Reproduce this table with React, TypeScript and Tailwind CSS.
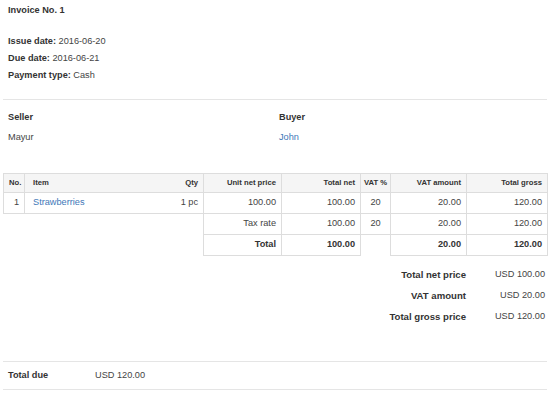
const items = [{ no: 1, name: 'Strawberries', qty: '1 pc', unit: '100.00', net: '100.00', vat: '20', vatAmount: '20.00', gross: '120.00' }]

const summary = [
  { label: 'Total net price', value: 'USD 100.00' },
  { label: 'VAT amount', value: 'USD 20.00' },
  { label: 'Total gross price', value: 'USD 120.00' },
]

const th = 'border border-[#dddddd] bg-[#f5f5f5] px-[5px] h-[19px] text-[7.7px] font-bold text-[#333] whitespace-nowrap'
const td = 'border border-[#dddddd] px-[5px] h-[21px] whitespace-nowrap'

export default function App() {
  return (
    <div className="w-[550px] h-[393px] bg-white px-[3px] text-[9.2px] text-[#444] overflow-hidden" style={{ fontFamily: '"Liberation Sans", Arial, sans-serif' }}>
      <div className="px-[5px] pt-[2px] leading-[17px]">
        <div className="font-bold text-[#333]">Invoice No. 1</div>
        <div className="mt-[14px]">
          <div><span className="font-bold text-[#333]">Issue date:</span> 2016-06-20</div>
          <div><span className="font-bold text-[#333]">Due date:</span> 2016-06-21</div>
          <div><span className="font-bold text-[#333]">Payment type:</span> Cash</div>
        </div>
      </div>

      <div className="mt-[15px] border-t border-[#e5e5e5]" />

      <div className="flex px-[5px] pt-[7px] leading-[20px]">
        <div className="w-[271px]">
          <div className="font-bold text-[#333]">Seller</div>
          <div>Mayur</div>
        </div>
        <div>
          <div className="font-bold text-[#333]">Buyer</div>
          <div className="text-[#4278b8]">John</div>
        </div>
      </div>

      <table className="mt-[26px] w-[544px] border-collapse table-fixed">
        <colgroup>
          <col className="w-[21px]" />
          <col className="w-[149px]" />
          <col className="w-[30px]" />
          <col className="w-[78px]" />
          <col className="w-[79px]" />
          <col className="w-[30px]" />
          <col className="w-[76px]" />
          <col className="w-[81px]" />
        </colgroup>
        <thead>
          <tr>
            <th className={`${th} text-left`}>No.</th>
            <th className={`${th} text-left border-r-0 !pl-[8px]`}>Item</th>
            <th className={`${th} text-right border-l-0`}>Qty</th>
            <th className={`${th} text-right`}>Unit net price</th>
            <th className={`${th} text-right`}>Total net</th>
            <th className={`${th} text-center !px-[2px]`}>VAT %</th>
            <th className={`${th} text-right`}>VAT amount</th>
            <th className={`${th} text-right`}>Total gross</th>
          </tr>
        </thead>
        <tbody>
          {items.map((it) => (
            <tr key={it.no}>
              <td className={`${td} text-right`}>{it.no}</td>
              <td className={`${td} text-left border-r-0 !pl-[8px] text-[#4278b8]`}>{it.name}</td>
              <td className={`${td} text-right border-l-0`}>{it.qty}</td>
              <td className={`${td} text-right`}>{it.unit}</td>
              <td className={`${td} text-right`}>{it.net}</td>
              <td className={`${td} text-center`}>{it.vat}</td>
              <td className={`${td} text-right`}>{it.vatAmount}</td>
              <td className={`${td} text-right`}>{it.gross}</td>
            </tr>
          ))}
          <tr>
            <td colSpan={3} className="border-0" />
            <td className={`${td} text-right`}>Tax rate</td>
            <td className={`${td} text-right`}>100.00</td>
            <td className={`${td} text-center`}>20</td>
            <td className={`${td} text-right`}>20.00</td>
            <td className={`${td} text-right`}>120.00</td>
          </tr>
          <tr className="font-bold text-[#333]">
            <td colSpan={3} className="border-0" />
            <td className={`${td} h-[20px] text-right`}>Total</td>
            <td className={`${td} h-[20px] text-right`}>100.00</td>
            <td className="border-0" />
            <td className={`${td} h-[20px] text-right`}>20.00</td>
            <td className={`${td} h-[20px] text-right`}>120.00</td>
          </tr>
        </tbody>
      </table>

      <div className="mt-[8px] leading-[21px]">
        {summary.map((s) => (
          <div key={s.label} className="flex justify-end">
            <div className="font-bold text-[#333] text-right text-[9.6px]">{s.label}</div>
            <div className="w-[81px] pr-[2px] text-right">{s.value}</div>
          </div>
        ))}
      </div>

      <div className="mt-[34px] flex items-center h-[29px] px-[5px] border-y border-[#e5e5e5]">
        <div className="w-[87px] font-bold text-[#333]">Total due</div>
        <div>USD 120.00</div>
      </div>
    </div>
  )
}
